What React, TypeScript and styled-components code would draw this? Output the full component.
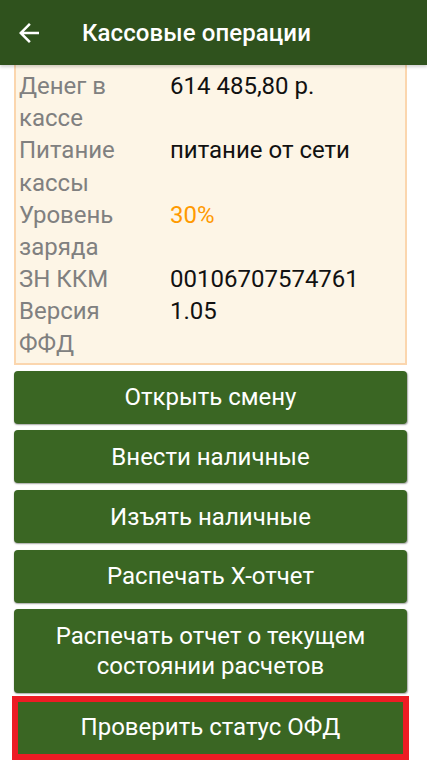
import React from "react";
import styled, { createGlobalStyle } from "styled-components";

const Global = createGlobalStyle`
  html, body { margin: 0; padding: 0; background: #ffffff; }
  body { font-family: Roboto, "Noto Sans", "Liberation Sans", sans-serif; }
  * { box-sizing: border-box; }
`;

const Screen = styled.div`
  width: 427px;
  height: 772px;
  overflow: hidden;
  display: flex;
  flex-direction: column;
  background: #ffffff;
`;

const Toolbar = styled.header`
  height: 65px;
  flex: none;
  display: flex;
  align-items: center;
  background: #2f521d;
  box-shadow: 0 2px 3px rgba(0, 0, 0, 0.18);
  position: relative;
  z-index: 1;
`;

const BackButton = styled.div`
  width: 30px;
  height: 30px;
  margin-left: 14px;
  display: flex;
  align-items: center;
  justify-content: center;
`;

const Title = styled.h1`
  margin: 0 0 0 38px;
  color: #ffffff;
  font-size: 24px;
  font-weight: 500;
  letter-spacing: 0.1px;
`;

const Content = styled.main`
  display: flex;
  flex-direction: column;
  padding: 0 20px 0 14px;
  gap: 6px;
`;

const InfoCard = styled.section`
  background: #fdf5e6;
  border: 2px solid #fbd6ae;
  border-top: none;
  padding: 5px 4px 3px 3px;
  display: grid;
  grid-template-columns: 128px 1fr;
  column-gap: 23px;
`;

const Label = styled.div`
  color: #808080;
  font-size: 24px;
  line-height: 32.2px;
`;

const Value = styled.div<{ $accent?: boolean }>`
  color: ${(p) => (p.$accent ? "#ff9a00" : "#111111")};
  font-size: 24px;
  line-height: 32.2px;
`;

const ActionButton = styled.button<{ $tall?: boolean }>`
  width: 100%;
  min-height: ${(p) => (p.$tall ? "84px" : "53px")};
  border: none;
  border-radius: 4px;
  background: #3a6623;
  box-shadow: 0.5px 1px 1.5px rgba(0, 0, 0, 0.35);
  color: #ffffff;
  font-family: Roboto, "Noto Sans", "Liberation Sans", sans-serif;
  font-size: 24px;
  line-height: 30px;
  padding: 0 16px;
  margin-bottom: 0.6px;
  display: flex;
  align-items: center;
  justify-content: center;
  text-align: center;
`;

const Highlight = styled.div`
  margin: -4px -2px 0 -2px;
  height: 64px;
  border: 6px solid #ed1c24;
  background: #3a6623;
  display: flex;
  align-items: center;
  justify-content: center;
  color: #ffffff;
  font-size: 24px;
  padding-bottom: 1px;
`;

const rows: { label: string; value: string; accent?: boolean }[] = [
  { label: "Денег в кассе", value: "614 485,80 р." },
  { label: "Питание кассы", value: "питание от сети" },
  { label: "Уровень заряда", value: "30%", accent: true },
  { label: "ЗН ККМ", value: "00106707574761" },
  { label: "Версия ФФД", value: "1.05" },
];

export default function App() {
  return (
    <>
      <Global />
      <Screen>
        <Toolbar>
          <BackButton>
            <svg width="30" height="30" viewBox="0 0 24 24" fill="#ffffff">
              <path d="M20 11H7.83l5.59-5.59L12 4l-8 8 8 8 1.41-1.41L7.83 13H20v-2z" />
            </svg>
          </BackButton>
          <Title>Кассовые операции</Title>
        </Toolbar>
        <Content>
          <InfoCard>
            {rows.map((r) => (
              <React.Fragment key={r.label}>
                <Label>{r.label}</Label>
                <Value $accent={r.accent}>{r.value}</Value>
              </React.Fragment>
            ))}
          </InfoCard>
          <ActionButton>Открыть смену</ActionButton>
          <ActionButton>Внести наличные</ActionButton>
          <ActionButton>Изъять наличные</ActionButton>
          <ActionButton>Распечать X-отчет</ActionButton>
          <ActionButton $tall>
            Распечать отчет о текущем
            <br />
            состоянии расчетов
          </ActionButton>
          <Highlight>Проверить статус ОФД</Highlight>
        </Content>
      </Screen>
    </>
  );
}
